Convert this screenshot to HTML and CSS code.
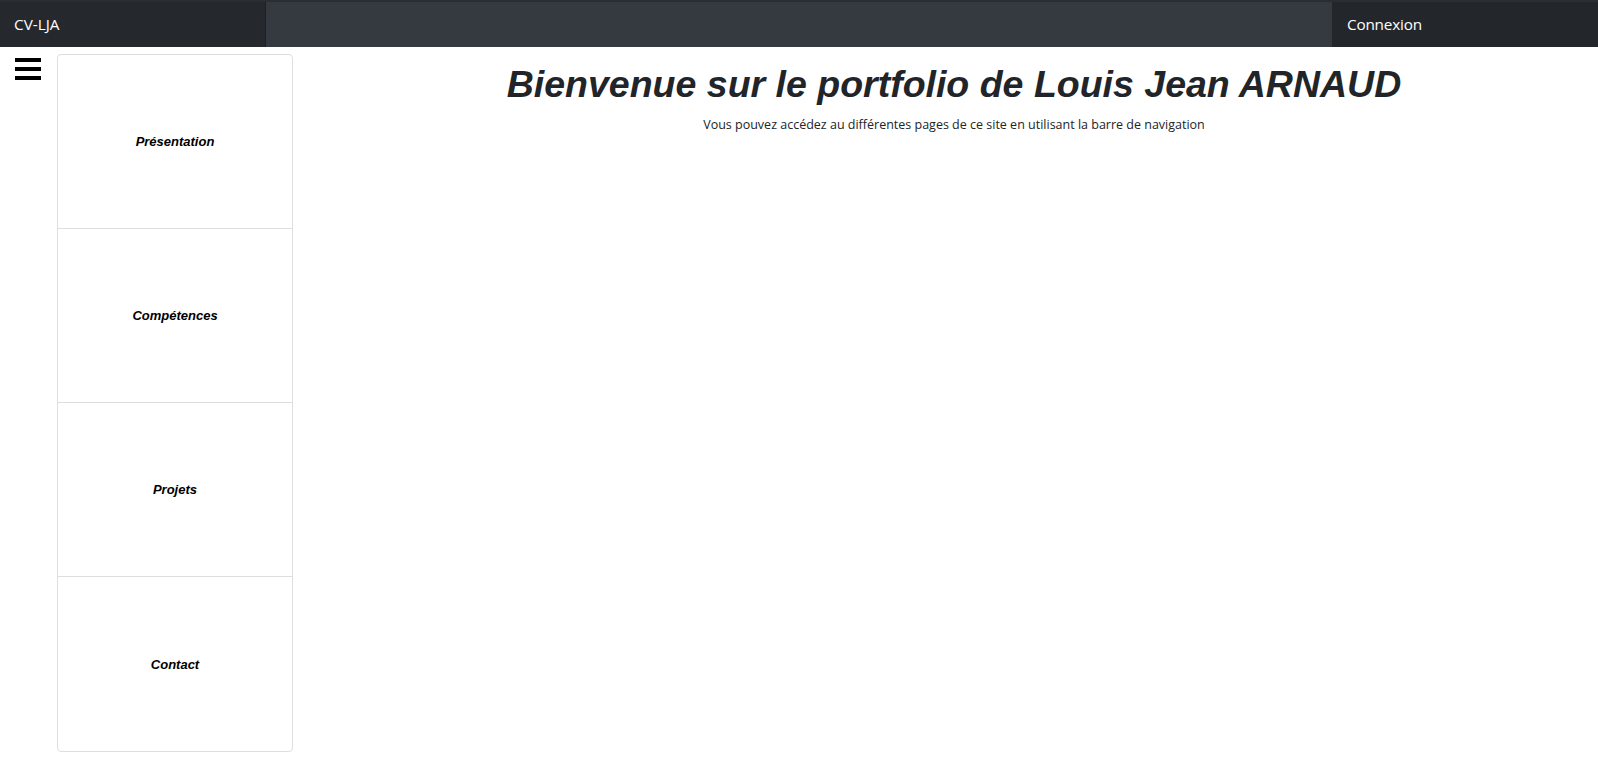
FILE: index.html
```html
<!DOCTYPE html>
<html lang="fr">
<head>
<meta charset="utf-8">
<title>CV-LJA</title>
<link rel="stylesheet" href="styles.css">
</head>
<body>
<header class="topbar">
  <div class="brand">CV-LJA</div>
  <div class="middle"></div>
  <div class="login">Connexion</div>
</header>
<div class="layout">
  <div class="burger-col">
    <div class="burger"><span></span><span></span><span></span></div>
  </div>
  <nav class="side">
    <a class="side-item">Présentation</a>
    <a class="side-item">Compétences</a>
    <a class="side-item">Projets</a>
    <a class="side-item">Contact</a>
  </nav>
  <main class="content">
    <h1 class="title">Bienvenue sur le portfolio de Louis Jean ARNAUD</h1>
    <p class="lead">Vous pouvez accédez au différentes pages de ce site en utilisant la barre de navigation</p>
  </main>
</div>
</body>
</html>
```
FILE: styles.css
```css
html, body {
  margin: 0;
  padding: 0;
  background: #fff;
  font-family: "Open Sans", "Noto Sans", sans-serif;
}
.topbar {
  display: flex;
  height: 45px;
  border-top: 2px solid #2b2e31;
  background: #343a40;
  color: #fff;
  font-size: 15.3px;
}
.brand {
  width: 266px;
  box-sizing: border-box;
  padding: 0 0 2px 14px;
  background: #25292d;
  display: flex;
  align-items: center;
  border-right: 1px solid #1d2023;
}
.middle {
  flex: 1;
}
.login {
  width: 266px;
  box-sizing: border-box;
  padding: 0 0 2px 15px;
  background: #23272b;
  display: flex;
  align-items: center;
  letter-spacing: -0.2px;
}
.layout {
  display: flex;
  align-items: flex-start;
  padding-top: 7px;
}
.burger-col {
  width: 57px;
  flex: none;
}
.burger {
  margin: 4px 0 0 15px;
  width: 26px;
  display: flex;
  flex-direction: column;
  gap: 5px;
}
.burger span {
  display: block;
  height: 4px;
  background: #000;
}
.side {
  width: 236px;
  flex: none;
  box-sizing: border-box;
  border: 1px solid #dedede;
  border-radius: 4px;
  display: flex;
  flex-direction: column;
}
.side-item {
  height: 174px;
  display: flex;
  align-items: center;
  justify-content: center;
  font-family: "Liberation Sans", Arial, sans-serif;
  font-weight: bold;
  font-style: italic;
  font-size: 13px;
  color: #000;
  border-bottom: 1px solid #dedede;
  box-sizing: border-box;
}
.side-item:last-child {
  border-bottom: none;
}
.content {
  flex: 1;
  text-align: center;
  padding-left: 17px;
}
.title {
  margin: 9px 0 0;
  font-family: "Liberation Sans", Arial, sans-serif;
  font-weight: bold;
  font-style: italic;
  font-size: 37.5px;
  line-height: 43px;
  color: #212529;
}
.lead {
  margin: 10px 0 0;
  font-size: 12.5px;
  color: #212529;
}
```
